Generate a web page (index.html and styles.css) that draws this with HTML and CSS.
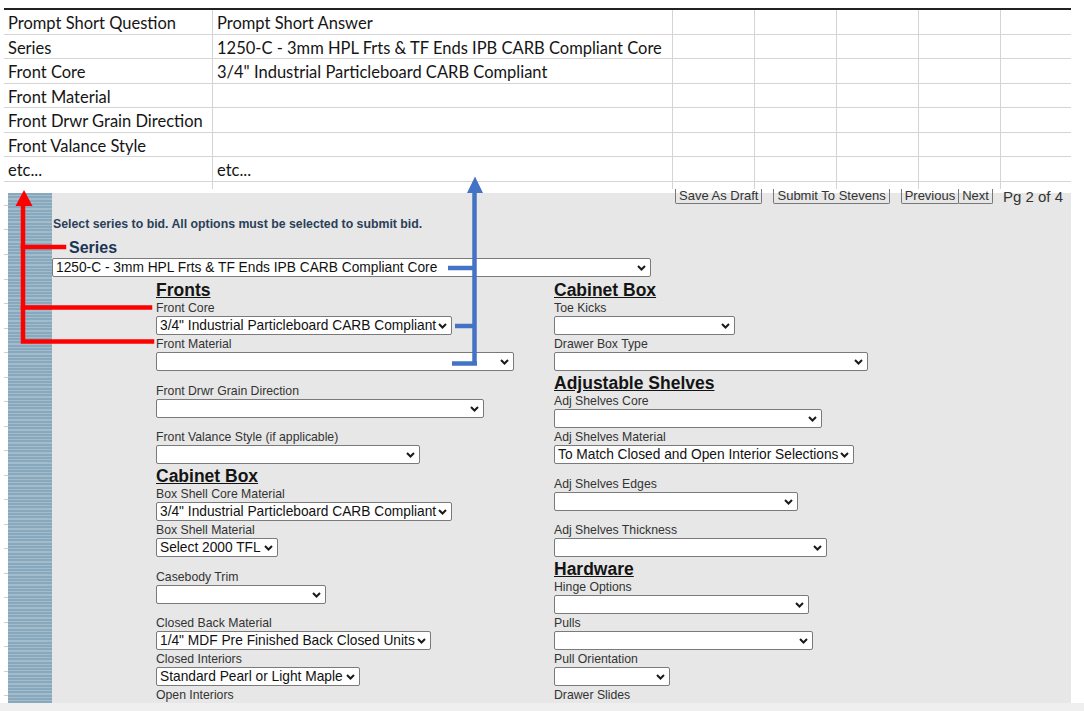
FILE: index.html
```html
<!DOCTYPE html>
<html lang="en">
<head>
<meta charset="utf-8">
<title>Prompt mapping</title>
<link rel="stylesheet" href="styles.css">
</head>
<body>
<div class="page">
  <div class="sheet">
    <div class="row"><span>Prompt Short Question</span><span>Prompt Short Answer</span><span></span><span></span><span></span><span></span><span></span></div>
    <div class="row"><span>Series</span><span>1250-C - 3mm HPL Frts &amp; TF Ends IPB CARB Compliant Core</span><span></span><span></span><span></span><span></span><span></span></div>
    <div class="row"><span>Front Core</span><span>3/4" Industrial Particleboard CARB Compliant</span><span></span><span></span><span></span><span></span><span></span></div>
    <div class="row"><span>Front Material</span><span></span><span></span><span></span><span></span><span></span><span></span></div>
    <div class="row"><span>Front Drwr Grain Direction</span><span></span><span></span><span></span><span></span><span></span><span></span></div>
    <div class="row"><span>Front Valance Style</span><span></span><span></span><span></span><span></span><span></span><span></span></div>
    <div class="row"><span>etc...</span><span>etc...</span><span></span><span></span><span></span><span></span><span></span></div>
    <div class="row cut"><span></span><span></span><span></span><span></span><span></span><span></span><span></span></div>
  </div>

  <div class="shot">
    <div class="gutter"></div>
    <div class="stripe"></div>
    <div class="main">
      <div class="toolbar">
        <span class="btn">Save As Draft</span>
        <span class="btn">Submit To Stevens</span>
        <span class="pager"><span class="btn">Previous</span><span class="btn">Next</span></span>
        <span class="pg">Pg 2 of 4</span>
      </div>
      <p class="intro">Select series to bid. All options must be selected to submit bid.</p>
      <div class="series-title">Series</div>
      <div class="select w599"><span>1250-C - 3mm HPL Frts &amp; TF Ends IPB CARB Compliant Core</span><svg viewBox="0 0 9 6"><path d="M1 1 L4.5 4.5 L8 1"/></svg></div>

      <div class="cols">
        <div class="col">
          <div class="sec">Fronts</div>
          <div class="field"><label>Front Core</label><div class="select w296"><span>3/4" Industrial Particleboard CARB Compliant</span><svg viewBox="0 0 9 6"><path d="M1 1 L4.5 4.5 L8 1"/></svg></div></div>
          <div class="field"><label>Front Material</label><div class="select w358"><span></span><svg viewBox="0 0 9 6"><path d="M1 1 L4.5 4.5 L8 1"/></svg></div></div>
          <div class="field gap-a"><label>Front Drwr Grain Direction</label><div class="select w328"><span></span><svg viewBox="0 0 9 6"><path d="M1 1 L4.5 4.5 L8 1"/></svg></div></div>
          <div class="field gap-b"><label>Front Valance Style (if applicable)</label><div class="select w264"><span></span><svg viewBox="0 0 9 6"><path d="M1 1 L4.5 4.5 L8 1"/></svg></div></div>
          <div class="sec">Cabinet Box</div>
          <div class="field"><label>Box Shell Core Material</label><div class="select w296"><span>3/4" Industrial Particleboard CARB Compliant</span><svg viewBox="0 0 9 6"><path d="M1 1 L4.5 4.5 L8 1"/></svg></div></div>
          <div class="field"><label>Box Shell Material</label><div class="select w122"><span>Select 2000 TFL</span><svg viewBox="0 0 9 6"><path d="M1 1 L4.5 4.5 L8 1"/></svg></div></div>
          <div class="field gap-a"><label>Casebody Trim</label><div class="select w170"><span></span><svg viewBox="0 0 9 6"><path d="M1 1 L4.5 4.5 L8 1"/></svg></div></div>
          <div class="field gap-b"><label>Closed Back Material</label><div class="select w275"><span>1/4" MDF Pre Finished Back Closed Units</span><svg viewBox="0 0 9 6"><path d="M1 1 L4.5 4.5 L8 1"/></svg></div></div>
          <div class="field"><label>Closed Interiors</label><div class="select w204"><span>Standard Pearl or Light Maple</span><svg viewBox="0 0 9 6"><path d="M1 1 L4.5 4.5 L8 1"/></svg></div></div>
          <div class="field"><label>Open Interiors</label><div class="select w204"><span></span><svg viewBox="0 0 9 6"><path d="M1 1 L4.5 4.5 L8 1"/></svg></div></div>
        </div>
        <div class="col">
          <div class="sec">Cabinet Box</div>
          <div class="field"><label>Toe Kicks</label><div class="select w181"><span></span><svg viewBox="0 0 9 6"><path d="M1 1 L4.5 4.5 L8 1"/></svg></div></div>
          <div class="field"><label>Drawer Box Type</label><div class="select w314"><span></span><svg viewBox="0 0 9 6"><path d="M1 1 L4.5 4.5 L8 1"/></svg></div></div>
          <div class="sec">Adjustable Shelves</div>
          <div class="field"><label>Adj Shelves Core</label><div class="select w268"><span></span><svg viewBox="0 0 9 6"><path d="M1 1 L4.5 4.5 L8 1"/></svg></div></div>
          <div class="field"><label>Adj Shelves Material</label><div class="select w300"><span>To Match Closed and Open Interior Selections</span><svg viewBox="0 0 9 6"><path d="M1 1 L4.5 4.5 L8 1"/></svg></div></div>
          <div class="field gap-a"><label>Adj Shelves Edges</label><div class="select w244"><span></span><svg viewBox="0 0 9 6"><path d="M1 1 L4.5 4.5 L8 1"/></svg></div></div>
          <div class="field gap-b"><label>Adj Shelves Thickness</label><div class="select w273"><span></span><svg viewBox="0 0 9 6"><path d="M1 1 L4.5 4.5 L8 1"/></svg></div></div>
          <div class="sec">Hardware</div>
          <div class="field"><label>Hinge Options</label><div class="select w255"><span></span><svg viewBox="0 0 9 6"><path d="M1 1 L4.5 4.5 L8 1"/></svg></div></div>
          <div class="field"><label>Pulls</label><div class="select w259"><span></span><svg viewBox="0 0 9 6"><path d="M1 1 L4.5 4.5 L8 1"/></svg></div></div>
          <div class="field"><label>Pull Orientation</label><div class="select w116"><span></span><svg viewBox="0 0 9 6"><path d="M1 1 L4.5 4.5 L8 1"/></svg></div></div>
          <div class="field"><label>Drawer Slides</label><div class="select w304"><span></span><svg viewBox="0 0 9 6"><path d="M1 1 L4.5 4.5 L8 1"/></svg></div></div>
        </div>
      </div>
    </div>
  </div>
  <div class="footer"></div>

  <svg class="annot" width="1084" height="711" viewBox="0 0 1084 711" aria-hidden="true">
    <g class="red-lines">
      <path d="M23 203 V341.5 H152"/>
      <path d="M23 247 H64"/>
      <path d="M23 307.5 H150"/>
    </g>
    <polygon class="red-head" points="24,190 15.5,206 32.5,206"/>
    <g class="blue-lines">
      <path d="M474.5 191 V365"/>
      <path d="M452 363.5 H477"/>
      <path d="M448 268 H474"/>
      <path d="M455 326 H474"/>
    </g>
    <polygon class="blue-head" points="475,176.5 467,193 483,193"/>
  </svg>
</div>
</body>
</html>
```

FILE: styles.css
```css
* { box-sizing: border-box; margin: 0; padding: 0; }
html, body { background: #fff; }
body { width: 1084px; height: 711px; overflow: hidden; }

.page { position: relative; width: 1084px; height: 711px; padding-top: 8px; }

/* spreadsheet */
.sheet {
  margin-left: 4px;
  width: 1067px;
  border-top: 2px solid #222;
  font-family: Lato, "Liberation Sans", sans-serif;
  font-size: 16.5px;
  color: #151515;
}
.row {
  display: grid;
  grid-template-columns: 209px 460px 82px 82px 82px 82px 70px;
  height: 24.5px;
  border-bottom: 1px solid #d4d4d4;
}
.row span {
  border-right: 1px solid #d4d4d4;
  padding: 1px 0 0 4px;
  line-height: 24px;
  white-space: nowrap;
  overflow: hidden;
}
.row span:last-child { border-right: none; }
.row.cut { height: 7.5px; border-bottom: none; }

/* embedded form screenshot */
.shot {
  display: grid;
  grid-template-columns: 4px 44px 1fr;
  margin-left: 4px;
  width: 1067px;
  height: 514px;
  overflow: hidden;
  font-family: "Liberation Sans", Arial, sans-serif;
}
.gutter {
  background: repeating-linear-gradient(to bottom, transparent 0 16px, #cfcfcf 16px 17px, transparent 17px 24.5px);
}
.stripe {
  margin-top: 4px;
  background: repeating-linear-gradient(to bottom, #88a8bd 0 2px, #a2bccc 2px 3.3px);
}
.main {
  min-width: 0;
  background: linear-gradient(#fff 0 4px, #e7e7e7 4px);
}

.toolbar {
  height: 16px;
  display: flex;
  justify-content: flex-end;
  align-items: flex-start;
  gap: 11px;
  padding-right: 8px;
}
.btn {
  height: 15px;
  border: 1px solid #777;
  border-top: none;
  border-radius: 0 0 2px 2px;
  padding: 0 3px;
  font-size: 13px;
  line-height: 14px;
  color: #333;
  white-space: nowrap;
}
.pager { display: flex; }
.pager .btn + .btn { margin-left: -1px; }
.pg {
  margin-left: -1px;
  font-size: 15px;
  line-height: 16px;
  color: #333;
  white-space: nowrap;
}

.intro {
  margin-top: 12px;
  padding-left: 1px;
  font-size: 12.3px;
  font-weight: bold;
  line-height: 15px;
  color: #2a4058;
}
.series-title {
  margin-top: 6px;
  padding-left: 17px;
  font-size: 16px;
  font-weight: bold;
  line-height: 19px;
  color: #1b3555;
}
.main > .select { margin-top: 1px; }

.cols {
  display: grid;
  grid-template-columns: 398px 1fr;
  margin: 3px 0 0 104px;
}
.sec {
  font-size: 17.5px;
  font-weight: bold;
  text-decoration: underline;
  line-height: 21px;
  color: #141414;
}
.field { margin-bottom: 2px; }
.field.gap-a { margin-top: 13px; }
.field.gap-b { margin-top: 12px; }
.field label {
  display: block;
  font-size: 12.25px;
  line-height: 15px;
  color: #333;
}

.select {
  display: flex;
  align-items: center;
  height: 19px;
  background: #fff;
  border: 1px solid #7a7a7a;
  border-radius: 2px;
  padding: 0 4px 0 3px;
  font-size: 13.75px;
  line-height: 17px;
  color: #111;
}
.select span { flex: 1; white-space: nowrap; overflow: hidden; }
.select svg { flex: none; width: 9px; height: 6px; }
.select path { fill: none; stroke: #1a1a1a; stroke-width: 2; }

.w116 { width: 116px; }
.w122 { width: 122px; }
.w170 { width: 170px; }
.w181 { width: 181px; }
.w204 { width: 204px; }
.w244 { width: 244px; }
.w255 { width: 255px; }
.w259 { width: 259px; }
.w264 { width: 264px; }
.w268 { width: 268px; }
.w273 { width: 273px; }
.w275 { width: 275px; }
.w296 { width: 296px; }
.w300 { width: 300px; }
.w304 { width: 304px; }
.w314 { width: 314px; }
.w328 { width: 328px; }
.w358 { width: 358px; }
.w599 { width: 599px; }

.footer { height: 8px; background: #efefef; }

/* annotation overlay */
.annot { position: absolute; left: 0; top: 0; pointer-events: none; }
.red-lines path { fill: none; stroke: #ff0000; stroke-width: 4.5; stroke-linecap: square; }
.red-head { fill: #ff0000; }
.blue-lines path { fill: none; stroke: #4472c4; stroke-width: 4.5; }
.blue-head { fill: #4472c4; }
```
